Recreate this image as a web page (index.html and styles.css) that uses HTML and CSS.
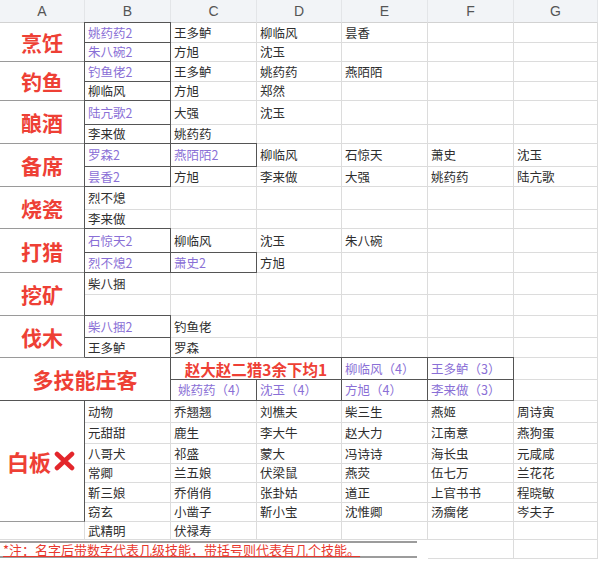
FILE: index.html
```html
<!DOCTYPE html>
<html lang="zh-CN">
<head>
<meta charset="utf-8">
<title>庄客技能表</title>
<link rel="stylesheet" href="styles.css">
</head>
<body>
<table class="sheet">
<colgroup>
<col class="w85"><col class="w86"><col class="w86"><col class="w85"><col class="w86"><col class="w86"><col class="w84">
</colgroup>
<thead>
<tr class="hdr"><th>A</th><th>B</th><th>C</th><th>D</th><th>E</th><th>F</th><th>G</th></tr>
</thead>
<tbody>
<tr class="h20"><td class="cat" rowspan="2">烹饪</td><td class="box p">姚药药2</td><td>王多鲈</td><td>柳临风</td><td>昙香</td><td></td><td></td></tr>
<tr class="h19"><td class="box p">朱八碗2</td><td>方旭</td><td>沈玉</td><td></td><td></td><td></td></tr>
<tr class="h20"><td class="cat" rowspan="2">钓鱼</td><td class="box p">钓鱼佬2</td><td>王多鲈</td><td>姚药药</td><td>燕陌陌</td><td></td><td></td></tr>
<tr class="h19"><td class="sb dr">柳临风</td><td>方旭</td><td>郑然</td><td></td><td></td><td></td></tr>
<tr class="h24"><td class="cat" rowspan="2">酿酒</td><td class="box p">陆亢歌2</td><td>大强</td><td>沈玉</td><td></td><td></td><td></td></tr>
<tr class="h19"><td class="sb dr">李来做</td><td>姚药药</td><td></td><td></td><td></td><td></td></tr>
<tr class="h23"><td class="cat" rowspan="2">备席</td><td class="box p">罗森2</td><td class="box p">燕陌陌2</td><td>柳临风</td><td>石惊天</td><td>萧史</td><td>沈玉</td></tr>
<tr class="h20"><td class="box p">昙香2</td><td>方旭</td><td>李来做</td><td>大强</td><td>姚药药</td><td>陆亢歌</td></tr>
<tr class="h23"><td class="cat" rowspan="2">烧瓷</td><td>烈不熄</td><td></td><td></td><td></td><td></td><td></td></tr>
<tr class="h19"><td class="sb">李来做</td><td></td><td></td><td></td><td></td><td></td></tr>
<tr class="h24"><td class="cat" rowspan="2">打猎</td><td class="box p">石惊天2</td><td>柳临风</td><td>沈玉</td><td>朱八碗</td><td></td><td></td></tr>
<tr class="h20"><td class="box p">烈不熄2</td><td class="box p">萧史2</td><td>方旭</td><td></td><td></td><td></td></tr>
<tr class="h22"><td class="cat" rowspan="2">挖矿</td><td>柴八捆</td><td></td><td></td><td></td><td></td><td></td></tr>
<tr class="h21"><td class="sb"></td><td></td><td></td><td></td><td></td><td></td></tr>
<tr class="h22"><td class="cat" rowspan="2">伐木</td><td class="box p">柴八捆2</td><td>钓鱼佬</td><td></td><td></td><td></td><td></td></tr>
<tr class="h20"><td class="sb dr">王多鲈</td><td>罗森</td><td></td><td></td><td></td><td></td></tr>
<tr class="h22"><td class="cat multi" rowspan="2" colspan="2">多技能庄客</td><td class="box hunt" colspan="2">赵大赵二猎3余下均1</td><td class="box p">柳临风（4）</td><td class="box p">王多鲈（3）</td><td></td></tr>
<tr class="h21"><td class="box p indent">姚药药（4）</td><td class="box p">沈玉（4）</td><td class="box p">方旭（4）</td><td class="box p">李来做（3）</td><td></td></tr>
<tr class="h22"><td class="cat blank" rowspan="6"><span class="blank-label">白板<svg class="xmark" width="25" height="20" viewBox="0 0 25 20" aria-hidden="true"><path d="M5 3 L20 17 M20 3 L5 17" stroke="#e3262b" stroke-width="4.6" stroke-linecap="round"/></svg></span></td><td>动物</td><td>乔翘翘</td><td>刘樵夫</td><td>柴三生</td><td>燕姬</td><td>周诗寅</td></tr>
<tr class="h21"><td>元甜甜</td><td>鹿生</td><td>李大牛</td><td>赵大力</td><td>江南意</td><td>燕狗蛋</td></tr>
<tr class="h20"><td>八哥犬</td><td>祁盛</td><td>蒙大</td><td>冯诗诗</td><td>海长虫</td><td>元咸咸</td></tr>
<tr class="h19"><td>常卿</td><td>兰五娘</td><td>伏梁鼠</td><td>燕荧</td><td>伍七万</td><td>兰花花</td></tr>
<tr class="h20"><td>靳三娘</td><td>乔俏俏</td><td>张卦姑</td><td>道正</td><td>上官书书</td><td>程晓敏</td></tr>
<tr class="h19"><td>窃玄</td><td>小凿子</td><td>靳小宝</td><td>沈惟卿</td><td>汤瘸佬</td><td>岑夫子</td></tr>
<tr class="h18"><td></td><td>武精明</td><td>伏禄寿</td><td></td><td></td><td></td><td></td></tr>
<tr class="h19"><td class="note" colspan="5"><div class="note-box">*注：名字后带数字代表几级技能，带括号则代表有几个技能。</div></td><td></td><td></td></tr>
</tbody>
</table>
</body>
</html>
```

FILE: styles.css
```css
html, body {
  margin: 0;
  padding: 0;
  background: #ffffff;
}

body {
  width: 600px;
  height: 561px;
  overflow: hidden;
  font-family: "Noto Sans CJK SC", "Noto Sans", sans-serif;
  color: #2e2e2e;
}

.sheet {
  border-collapse: separate;
  border-spacing: 0;
  table-layout: fixed;
  width: 598px;
  font-size: 12.5px;
}

.w85 { width: 85px; }
.w86 { width: 86px; }
.w84 { width: 84px; }

.sheet th,
.sheet td {
  border-right: 1px solid #dcdcdc;
  border-bottom: 1px solid #dcdcdc;
  padding: 0 3px;
  white-space: nowrap;
  text-align: left;
  vertical-align: middle;
  line-height: 16px;
  box-sizing: border-box;
}

.hdr { height: 23px; }

.sheet .hdr th {
  background: #f2f4f7;
  font-family: "Liberation Sans", Arial, sans-serif;
  font-weight: normal;
  font-size: 14px;
  color: #555555;
  text-align: center;
  border-right-color: #e3e5e8;
  border-bottom-color: #d2d2d2;
}

.h18 { height: 18px; }
.h19 { height: 19px; }
.h20 { height: 20px; }
.h21 { height: 21px; }
.h22 { height: 22px; }
.h23 { height: 23px; }
.h24 { height: 24px; }

.p { color: #8a6fd6; }

.box { position: relative; }

.box::after {
  content: "";
  position: absolute;
  top: -1px;
  left: -1px;
  right: -1px;
  bottom: -1px;
  border: 1px solid #555555;
  pointer-events: none;
}

.sheet .sb { border-bottom-color: #555555; }
.sheet .dr { border-right-color: #555555; }

.sheet .cat {
  text-align: center;
  color: #ee4035;
  font-weight: bold;
  font-size: 21px;
  line-height: 24px;
  padding: 0;
  border-right-color: #555555;
  border-bottom-color: #9a9a9a;
}

.sheet .multi {
  font-size: 21px;
  border-bottom-color: #555555;
}

.blank-label {
  display: inline-flex;
  align-items: center;
  gap: 1px;
  font-size: 22px;
}

.xmark { display: block; }

.sheet .hunt {
  text-align: center;
  color: #ee4035;
  font-weight: bold;
  font-size: 15.5px;
}

.sheet .indent { padding-left: 7px; }

.sheet .note {
  padding: 0;
  border-bottom: none;
  border-right: none;
}

.note-box {
  width: 417px;
  height: 17px;
  box-sizing: border-box;
  border-top: 2px solid #9c9c9c;
  border-bottom: 2px solid #9c9c9c;
  padding-left: 3px;
  color: #e8382e;
  font-size: 13px;
  line-height: 14px;
  text-decoration: underline;
  text-underline-offset: 1px;
}
```
